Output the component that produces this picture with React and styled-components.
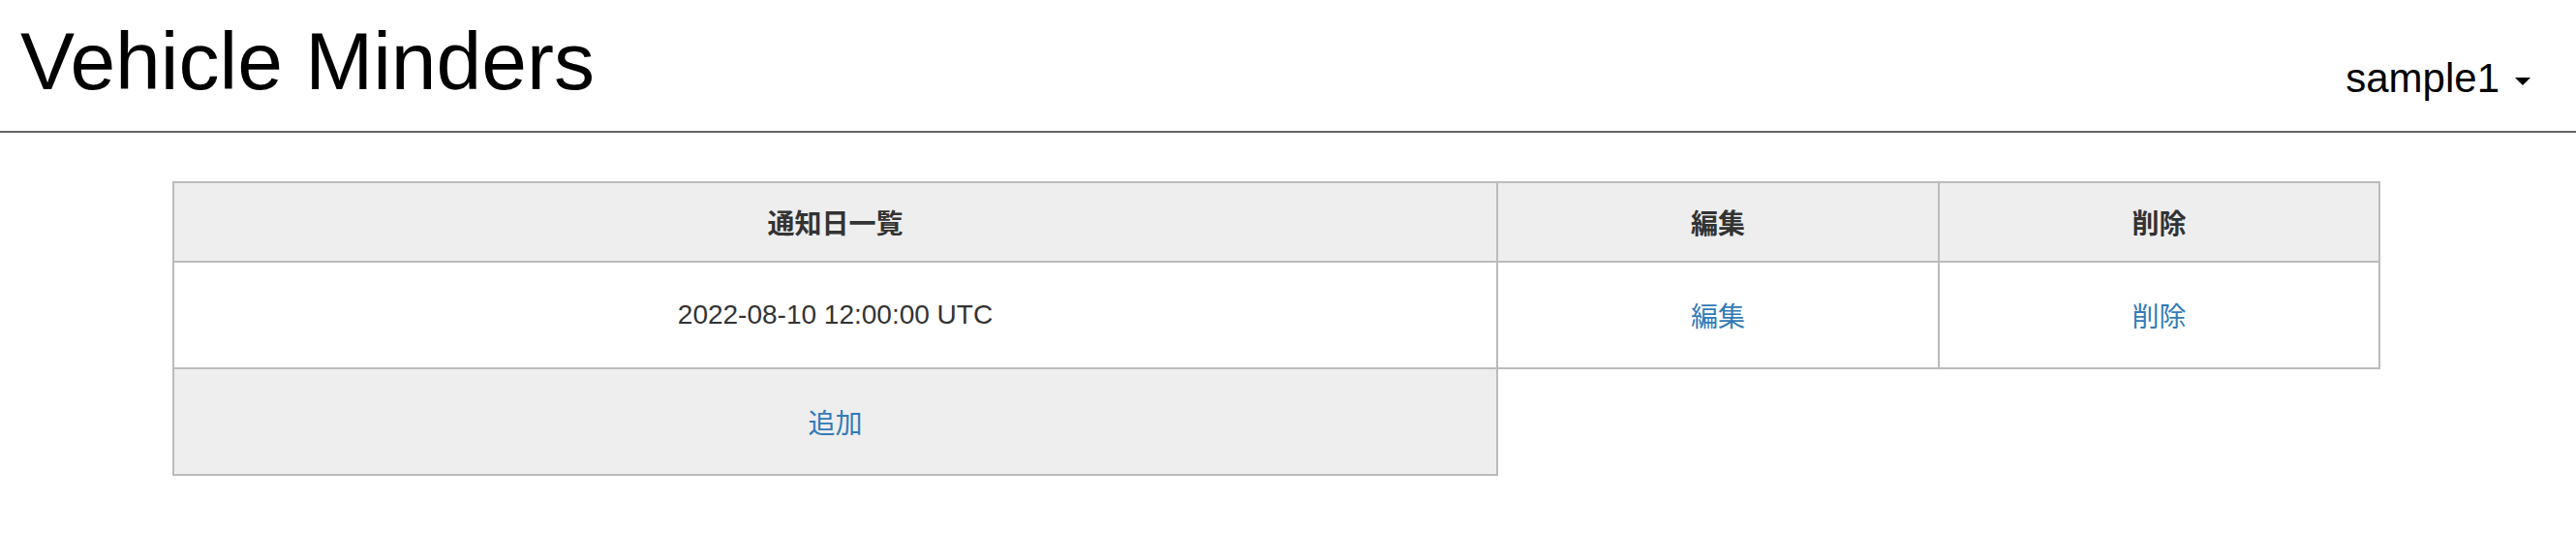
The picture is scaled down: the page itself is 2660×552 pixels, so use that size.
import React from "react";
import styled, { createGlobalStyle } from "styled-components";

const GlobalStyle = createGlobalStyle`
  body {
    margin: 0;
    background: #fff;
    font-family: "Liberation Sans", "Noto Sans CJK JP", sans-serif;
    color: #333;
  }
`;

const Header = styled.header`
  display: flex;
  justify-content: space-between;
  align-items: flex-start;
  height: 137px;
  padding: 21px 47px 0 21px;
  box-sizing: border-box;
  border-bottom: 2px solid #666;
`;

const Title = styled.h1`
  margin: 0;
  font-size: 84px;
  line-height: 84px;
  font-weight: normal;
  color: #000;
`;

const UserMenu = styled.div`
  margin-top: 39px;
  font-size: 42px;
  line-height: 42px;
  color: #000;
`;

const Caret = styled.span`
  display: inline-block;
  vertical-align: middle;
  margin-left: 16px;
  width: 0;
  height: 0;
  border-top: 8px solid #000;
  border-left: 8px solid transparent;
  border-right: 8px solid transparent;
`;

const Main = styled.main`
  padding: 50px 0 0 178px;
`;

const Grid = styled.div`
  display: grid;
  grid-template-columns: 1367px 456px 455px;
  border-top: 2px solid #bbb;
  border-left: 2px solid #bbb;
  width: 2280px;
  box-sizing: border-box;
`;

const Cell = styled.div`
  display: flex;
  align-items: center;
  justify-content: center;
  box-sizing: border-box;
  height: ${(p) => (p.$head ? 82 : 110)}px;
  border-right: 2px solid #bbb;
  border-bottom: 2px solid #bbb;
  background: ${(p) => (p.$shaded ? "#eee" : "#fff")};
  font-size: 28px;
  font-weight: ${(p) => (p.$head ? "bold" : "normal")};
  color: #333;
`;

const Link = styled.a`
  color: #337ab7;
  text-decoration: none;
  cursor: pointer;
`;

export default function App() {
  return (
    <>
      <GlobalStyle />
      <Header>
        <Title>Vehicle Minders</Title>
        <UserMenu>
          sample1
          <Caret />
        </UserMenu>
      </Header>
      <Main>
        <Grid>
          <Cell $head $shaded>通知日一覧</Cell>
          <Cell $head $shaded>編集</Cell>
          <Cell $head $shaded>削除</Cell>
          <Cell>2022-08-10 12:00:00 UTC</Cell>
          <Cell>
            <Link>編集</Link>
          </Cell>
          <Cell>
            <Link>削除</Link>
          </Cell>
          <Cell $shaded>
            <Link>追加</Link>
          </Cell>
        </Grid>
      </Main>
    </>
  );
}
